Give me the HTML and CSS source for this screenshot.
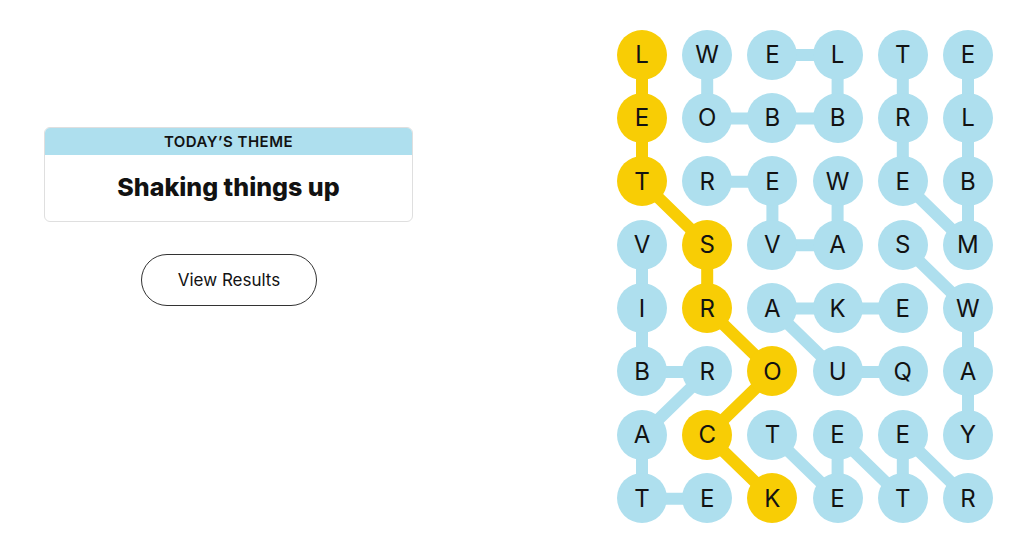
FILE: index.html
```html
<!DOCTYPE html>
<html lang="en">
<head>
<meta charset="utf-8">
<title>Strands</title>
<link rel="stylesheet" href="styles.css">
</head>
<body>
<main class="game">
  <section class="info">
    <div class="theme-card">
      <div class="theme-head">TODAY’S THEME</div>
      <div class="theme-body"><h1 class="theme-title">Shaking things up</h1></div>
    </div>
    <button class="results-btn" type="button">View Results</button>
  </section>

  <section class="board">
    <svg class="links" width="376" height="494" viewBox="0 0 376 494" aria-hidden="true">
      <g class="blue">
        <polyline points="90.2,25 90.2,88.4 155.4,88.4 220.6,88.4 220.6,25 155.4,25"/>
        <polyline points="285.8,25 285.8,88.4 285.8,151.8 351,215.2 351,151.8 351,88.4 351,25"/>
        <polyline points="220.6,151.8 220.6,215.2 155.4,215.2 155.4,151.8 90.2,151.8"/>
        <polyline points="25,215.2 25,278.6 25,342 90.2,342 25,405.4 25,468.8 90.2,468.8"/>
        <polyline points="285.8,215.2 351,278.6 351,342 351,405.4"/>
        <polyline points="285.8,342 220.6,342 155.4,278.6 220.6,278.6 285.8,278.6"/>
        <polyline points="155.4,405.4 220.6,468.8 220.6,405.4 285.8,468.8 285.8,405.4 351,468.8"/>
      </g>
      <g class="gold">
        <polyline points="25,25 25,88.4 25,151.8 90.2,215.2 90.2,278.6 155.4,342 90.2,405.4 155.4,468.8"/>
      </g>
    </svg>
    <div class="grid">
      <span class="cell gold">L</span><span class="cell">W</span><span class="cell">E</span><span class="cell">L</span><span class="cell">T</span><span class="cell">E</span>
      <span class="cell gold">E</span><span class="cell">O</span><span class="cell">B</span><span class="cell">B</span><span class="cell">R</span><span class="cell">L</span>
      <span class="cell gold">T</span><span class="cell">R</span><span class="cell">E</span><span class="cell">W</span><span class="cell">E</span><span class="cell">B</span>
      <span class="cell">V</span><span class="cell gold">S</span><span class="cell">V</span><span class="cell">A</span><span class="cell">S</span><span class="cell">M</span>
      <span class="cell">I</span><span class="cell gold">R</span><span class="cell">A</span><span class="cell">K</span><span class="cell">E</span><span class="cell">W</span>
      <span class="cell">B</span><span class="cell">R</span><span class="cell gold">O</span><span class="cell">U</span><span class="cell">Q</span><span class="cell">A</span>
      <span class="cell">A</span><span class="cell gold">C</span><span class="cell">T</span><span class="cell">E</span><span class="cell">E</span><span class="cell">Y</span>
      <span class="cell">T</span><span class="cell">E</span><span class="cell gold">K</span><span class="cell">E</span><span class="cell">T</span><span class="cell">R</span>
    </div>
  </section>
</main>
</body>
</html>
```

FILE: styles.css
```css
* { box-sizing: border-box; }

html, body {
  margin: 0;
  padding: 0;
  background: #ffffff;
  color: #121212;
  font-family: "Inter", "Liberation Sans", Arial, sans-serif;
}

.game {
  display: flex;
  align-items: flex-start;
  width: 1024px;
  height: 553px;
}

.info {
  width: 457px;
  padding-top: 127px;
  display: flex;
  flex-direction: column;
  align-items: center;
}

.theme-card {
  width: 369px;
  border: 1px solid #dfdfdf;
  border-radius: 6px;
  overflow: hidden;
  background: #fff;
}

.theme-head {
  height: 27px;
  background: #aedfee;
  text-align: center;
  font-size: 15px;
  font-weight: 600;
  line-height: 28px;
  letter-spacing: 0.5px;
}

.theme-body {
  height: 66px;
  display: flex;
  align-items: center;
  justify-content: center;
}

.theme-title {
  margin: 0;
  font-size: 25px;
  font-weight: 800;
  letter-spacing: 0;
  line-height: 1;
  padding-bottom: 2px;
}

.results-btn {
  margin-top: 32px;
  width: 176px;
  height: 52px;
  border: 1px solid #333333;
  border-radius: 26px;
  background: #fff;
  color: #121212;
  font-family: inherit;
  font-size: 17px;
  font-weight: 400;
  padding: 0 0 0 1px;
}

.board {
  position: relative;
  margin-left: 160px;
  margin-top: 29.5px;
  width: 376px;
  height: 494px;
}

.links {
  position: absolute;
  left: 0;
  top: 0;
}

.links polyline {
  fill: none;
  stroke-width: 12;
  stroke-linejoin: round;
}

.links .blue polyline { stroke: #aedfee; }
.links .gold polyline { stroke: #f8cd05; }

.grid {
  position: relative;
  display: grid;
  grid-template-columns: repeat(6, 50px);
  grid-auto-rows: 50px;
  column-gap: 15.2px;
  row-gap: 13.4px;
}

.cell {
  display: flex;
  align-items: center;
  justify-content: center;
  width: 50px;
  height: 50px;
  border-radius: 50%;
  background: #aedfee;
  font-size: 24px;
  font-weight: 400;
  color: #121212;
}

.cell.gold { background: #f8cd05; }
```
